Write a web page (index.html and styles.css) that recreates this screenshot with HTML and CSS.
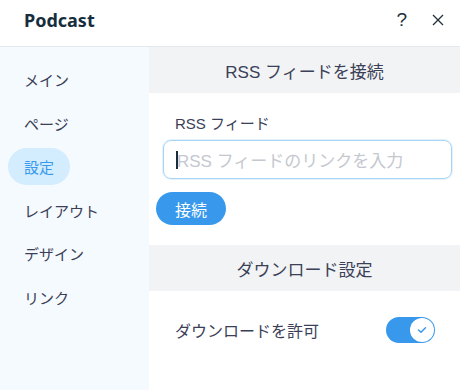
FILE: index.html
```html
<!DOCTYPE html>
<html lang="ja">
<head>
  <meta charset="UTF-8">
  <title>Podcast</title>
  <link rel="stylesheet" href="styles.css">
</head>
<body>

  <div class="header">
    <h1>Podcast</h1>
    <div class="header-actions">
      <span class="help">?</span>
      <svg class="close" width="12" height="12" viewBox="0 0 12 12">
        <path d="M1 1 L11 11 M11 1 L1 11" stroke="#20303c" stroke-width="1.3" fill="none"/>
      </svg>
    </div>
  </div>

  <div class="panel">
    <div class="sidebar">
      <div class="nav-item">メイン</div>
      <div class="nav-item">ページ</div>
      <div class="nav-item active">設定</div>
      <div class="nav-item">レイアウト</div>
      <div class="nav-item">デザイン</div>
      <div class="nav-item">リンク</div>
    </div>

    <div class="content">
      <div class="section-title">RSS フィードを接続</div>
      <div class="section-body">
        <label class="field-label">RSS フィード</label>
        <div class="input-box">
          <span class="caret"></span>
          <span class="placeholder">RSS フィードのリンクを入力</span>
        </div>
        <button class="connect">接続</button>
      </div>

      <div class="section-title">ダウンロード設定</div>
      <div class="toggle-row">
        <span>ダウンロードを許可</span>
        <div class="toggle">
          <div class="knob">
            <svg width="10" height="8" viewBox="0 0 10 8">
              <path d="M1.5 4 L4 6.3 L8.5 1.8" stroke="#3899ec" stroke-width="1.5" fill="none" stroke-linecap="round" stroke-linejoin="round"/>
            </svg>
          </div>
        </div>
      </div>
    </div>
  </div>

</body>
</html>
```

FILE: styles.css
```css
body {
  margin: 0;
  width: 460px;
  height: 390px;
  overflow: hidden;
  background: #fff;
  font-family: "Liberation Sans", "Noto Sans CJK JP", sans-serif;
  color: #3b4057;
}
.header {
  height: 46px;
  border-bottom: 1px solid #e3e8ec;
  display: flex;
  align-items: center;
  justify-content: space-between;
  padding: 0 16px 0 24px;
}
.header h1 {
  margin: 0;
  font-family: "Noto Sans", sans-serif;
  font-size: 18px;
  font-weight: 700;
  color: #162d3d;
  padding-bottom: 6px;
}
.header-actions {
  display: flex;
  align-items: center;
  gap: 25px;
  padding-bottom: 6px;
}
.help {
  font-family: "Liberation Sans", sans-serif;
  font-size: 19px;
  color: #20303c;
}
.panel {
  display: flex;
  height: 343px;
}
.sidebar {
  width: 149px;
  background: #f5fafe;
  padding-top: 14px;
}
.nav-item {
  height: 37px;
  margin: 0 0 6.5px 8px;
  padding: 0 16px;
  display: flex;
  align-items: center;
  width: fit-content;
  border-radius: 19px;
  font-family: "Noto Sans CJK JP", sans-serif;
  font-size: 15px;
  color: #3b4057;
}
.nav-item.active {
  background: #d3edff;
  color: #3899ec;
}
.content {
  flex: 1;
}
.section-title {
  height: 46px;
  background: #f1f3f5;
  display: flex;
  align-items: center;
  justify-content: center;
  font-size: 17px;
  color: #3b4057;
}
.section-body {
  padding: 21px 8px 20px 7px;
}
.field-label {
  display: block;
  margin-left: 19px;
  font-size: 15px;
  line-height: 20px;
}
.input-box {
  margin: 6px 0 0 7px;
  height: 37px;
  border: 1px solid #a8d5f6;
  border-radius: 8px;
  display: flex;
  align-items: center;
  padding-left: 12px;
  box-shadow: 0 0 0 1px #e3f2fd;
}
.caret {
  width: 2px;
  height: 18px;
  background: #162d3d;
}
.placeholder {
  font-size: 17px;
  color: #c4c8cf;
  margin-left: -1px;
}
.connect {
  display: block;
  margin-top: 13px;
  height: 33px;
  width: 70px;
  border: none;
  border-radius: 17px;
  background: #3899ec;
  color: #fff;
  font-family: "Noto Sans CJK JP", sans-serif;
  font-size: 16px;
}
.toggle-row {
  display: flex;
  align-items: center;
  justify-content: space-between;
  padding: 26px 25px 0 26px;
  font-size: 16px;
}
.toggle {
  width: 49px;
  height: 26px;
  border-radius: 13px;
  background: #3899ec;
  display: flex;
  align-items: center;
  justify-content: flex-end;
  padding-right: 1px;
  box-sizing: border-box;
}
.knob {
  width: 24px;
  height: 24px;
  border-radius: 50%;
  background: #fff;
  display: flex;
  align-items: center;
  justify-content: center;
}
```
